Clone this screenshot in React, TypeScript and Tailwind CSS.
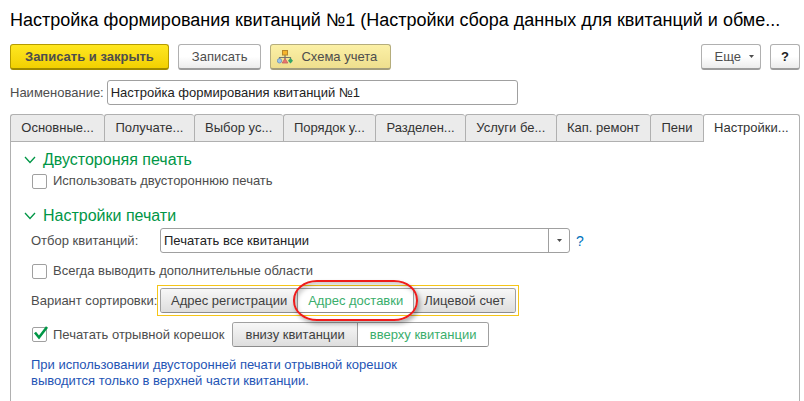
import { useState } from "react";
import clsx from "clsx";

const tabs = [
  "Основные...",
  "Получате...",
  "Выбор ус...",
  "Порядок у...",
  "Разделен...",
  "Услуги бе...",
  "Кап. ремонт",
  "Пени",
  "Настройки...",
];

const sortOptions = ["Адрес регистрации", "Адрес доставки", "Лицевой счет"];
const stubOptions = ["внизу квитанции", "вверху квитанции"];

const buttonBase = "h-[26px] rounded-[3px] border border-b-2 leading-5";
const plainButton = "border-[#b0b0b0] border-b-[#9c9c9c] bg-linear-to-b from-white from-50% to-[#ececec]";

function SchemeIcon() {
  return (
    <svg width="16" height="14" viewBox="0 0 16 14" aria-hidden="true">
      <path d="M8 5v4.500M2.500 9.500v-2h11v2" fill="none" stroke="#77756c" strokeWidth="1.200" />
      <rect x="5.500" y="0.500" width="5" height="4.500" fill="#f5b52c" stroke="#b8862a" />
      <circle cx="2.500" cy="10.800" r="2.200" fill="#9cc4e8" stroke="#6490bb" strokeWidth="0.800" />
      <path d="M8 8.500l2.800 4.500H5.200z" fill="#ea766e" stroke="#c4605a" strokeWidth="0.800" />
      <path d="M13.500 8l2.500 2.800-2.500 2.800-2.500-2.800z" fill="#35a567" />
    </svg>
  );
}

function Arrow() {
  return (
    <svg width="5" height="3" viewBox="0 0 5 3" aria-hidden="true">
      <path d="M0 0h5L2.500 3z" fill="#4d4d4d" />
    </svg>
  );
}

function SectionTitle({ children }: { children: string }) {
  return (
    <h2 className="flex items-center gap-[7px] text-base leading-5 text-[#009646]">
      <svg width="12" height="8" viewBox="0 0 12 8" aria-hidden="true">
        <path d="M1 1l5 5.500L11 1" fill="none" stroke="currentColor" strokeWidth="1.300" />
      </svg>
      {children}
    </h2>
  );
}

function Check({ label, defaultChecked }: { label: string; defaultChecked?: boolean }) {
  return (
    <label className="flex items-center gap-[6px] whitespace-nowrap">
      <span className="relative flex">
        <input
          type="checkbox"
          defaultChecked={defaultChecked}
          className="peer size-[15px] appearance-none rounded-[2px] border border-[#a0a0a0] bg-white"
        />
        <svg
          width="16"
          height="16"
          viewBox="0 0 16 16"
          className="pointer-events-none absolute bottom-0 left-0 hidden overflow-visible peer-checked:block"
          aria-hidden="true"
        >
          <path d="M3 6.500l4 5L15 1" fill="none" stroke="#009646" strokeWidth="2.600" />
        </svg>
      </span>
      {label}
    </label>
  );
}

function Segments({
  label,
  options,
  value,
  onChange,
  marked,
  padding,
}: {
  label: string;
  options: string[];
  value: string;
  onChange: (value: string) => void;
  marked?: string;
  padding: string;
}) {
  return (
    <div role="group" aria-label={label} className="flex rounded-[3px] border border-[#a0a0a0] border-b-[#8c8c8c]">
      {options.map((option) => (
        <button
          key={option}
          type="button"
          aria-pressed={option === value}
          onClick={() => onChange(option)}
          className={clsx(
            "relative h-[23px] border-r border-[#a0a0a0] whitespace-nowrap first:rounded-l-[2px] last:rounded-r-[2px] last:border-r-0",
            padding,
            option === value
              ? "bg-white text-[#3aae6c]"
              : "bg-linear-to-b from-[#f7f7f7] to-[#dedede] text-[#404040]"
          )}
        >
          {option}
          {/* Red marker ring */}
          {option === marked && (
            <span className="pointer-events-none absolute -inset-x-[5px] -inset-y-[9px] z-10 rounded-[24px/20px] border-2 border-[#ee1c1c] shadow-[2px_3px_4px_rgba(0,0,0,0.3),inset_2px_3px_4px_rgba(0,0,0,0.2)]" />
          )}
        </button>
      ))}
    </div>
  );
}

export default function App() {
  const [tab, setTab] = useState("Настройки...");
  const [sort, setSort] = useState("Адрес доставки");
  const [stub, setStub] = useState("вверху квитанции");

  return (
    <div className="flex min-h-screen flex-col overflow-hidden bg-white pt-2 pr-1 pl-[10px] font-['Liberation_Sans',Arial,sans-serif] text-[13px] leading-4 text-[#4d4d4d]">
      <h1 className="-mr-1 text-lg leading-6 whitespace-nowrap text-black">
        Настройка формирования квитанций №1 (Настройки сбора данных для квитанций и обме...
      </h1>

      {/* Toolbar */}
      <div className="mt-3 flex items-center gap-[9px]">
        <button
          type="button"
          className={clsx(buttonBase, "border-[#b59b00] border-b-[#a08a00] bg-linear-to-b from-[#ffe71f] to-[#f2d000] px-[14px] font-bold")}
        >
          Записать и закрыть
        </button>
        <button type="button" className={clsx(buttonBase, plainButton, "px-[13px]")}>
          Записать
        </button>
        <button
          type="button"
          className={clsx(buttonBase, "flex items-center gap-2 border-[#b5ad7c] border-b-[#a39d7c] bg-linear-to-b from-[#fbf0a6] to-[#efdf8e] pr-[13px] pl-[6px]")}
        >
          <SchemeIcon />
          Схема учета
        </button>
        <button type="button" className={clsx(buttonBase, plainButton, "ml-auto flex items-center gap-2 pr-[6px] pl-[13px]")}>
          Еще
          <Arrow />
        </button>
        <button type="button" className={clsx(buttonBase, plainButton, "w-[30px] font-bold text-[#222]")}>
          ?
        </button>
      </div>

      {/* Name */}
      <div className="mt-[10px] flex items-center gap-[3px]">
        <label htmlFor="name">Наименование:</label>
        <input
          id="name"
          defaultValue="Настройка формирования квитанций №1"
          className="h-[25px] w-full max-w-[411px] rounded-[3px] border border-[#a0a0a0] px-[3px] text-[#222]"
        />
      </div>

      {/* Tabs */}
      <div role="tablist" className="mt-[9px] flex">
        {tabs.map((name) => (
          <button
            key={name}
            type="button"
            role="tab"
            aria-selected={name === tab}
            onClick={() => setTab(name)}
            className={clsx(
              "h-7 flex-auto rounded-t-[3px] border-t border-l border-[#b0b0b0] pb-px whitespace-nowrap text-[#333] last:border-r",
              name === tab ? "bg-white" : "border-b bg-[#ebebeb]"
            )}
          >
            {name}
          </button>
        ))}
      </div>

      <div role="tabpanel" className="flex flex-1 flex-col items-start border-x border-[#b0b0b0] pt-2 pr-3 pb-2 pl-5">
        <div className="-ml-2 pl-px">
          <SectionTitle>Двустороняя печать</SectionTitle>
        </div>
        <div className="mt-[3px] pl-px">
          <Check label="Использовать двустороннюю печать" />
        </div>

        <div className="mt-[17px] -ml-2 pl-px">
          <SectionTitle>Настройки печати</SectionTitle>
        </div>
        <div className="mt-[2px] flex w-full items-center">
          <label htmlFor="filter" className="w-[129px] shrink-0">
            Отбор квитанций:
          </label>
          <div className="relative w-full max-w-[410px]">
            <select
              id="filter"
              className="block h-[25px] w-full appearance-none rounded-[3px] border border-[#a0a0a0] bg-white pr-6 pl-[3px] text-[#222]"
            >
              <option>Печатать все квитанции</option>
            </select>
            <span className="pointer-events-none absolute inset-y-px right-px flex w-[21px] items-center justify-center border-l border-[#a0a0a0]">
              <Arrow />
            </span>
          </div>
          <a href="#help" className="ml-[6px] text-sm text-[#0072bc]">
            ?
          </a>
        </div>
        <div className="mt-[10px] pl-px">
          <Check label="Всегда выводить дополнительные области" />
        </div>

        <div className="mt-[6px] flex items-center">
          <span className="w-[126px] shrink-0 whitespace-nowrap">Вариант сортировки:</span>
          <div className="border border-[#f5c518] p-[2px]">
            <Segments
              label="Вариант сортировки"
              options={sortOptions}
              value={sort}
              onChange={setSort}
              marked="Адрес доставки"
              padding="px-[10px]"
            />
          </div>
        </div>

        <div className="mt-[6px] flex items-center gap-2 pl-px">
          <Check label="Печатать отрывной корешок" defaultChecked />
          <Segments label="Положение корешка" options={stubOptions} value={stub} onChange={setStub} padding="px-3" />
        </div>

        <p className="mt-[10px] text-[#1f55b5]">
          При использовании двусторонней печати отрывной корешок
          <br />
          выводится только в верхней части квитанции.
        </p>
      </div>
    </div>
  );
}
